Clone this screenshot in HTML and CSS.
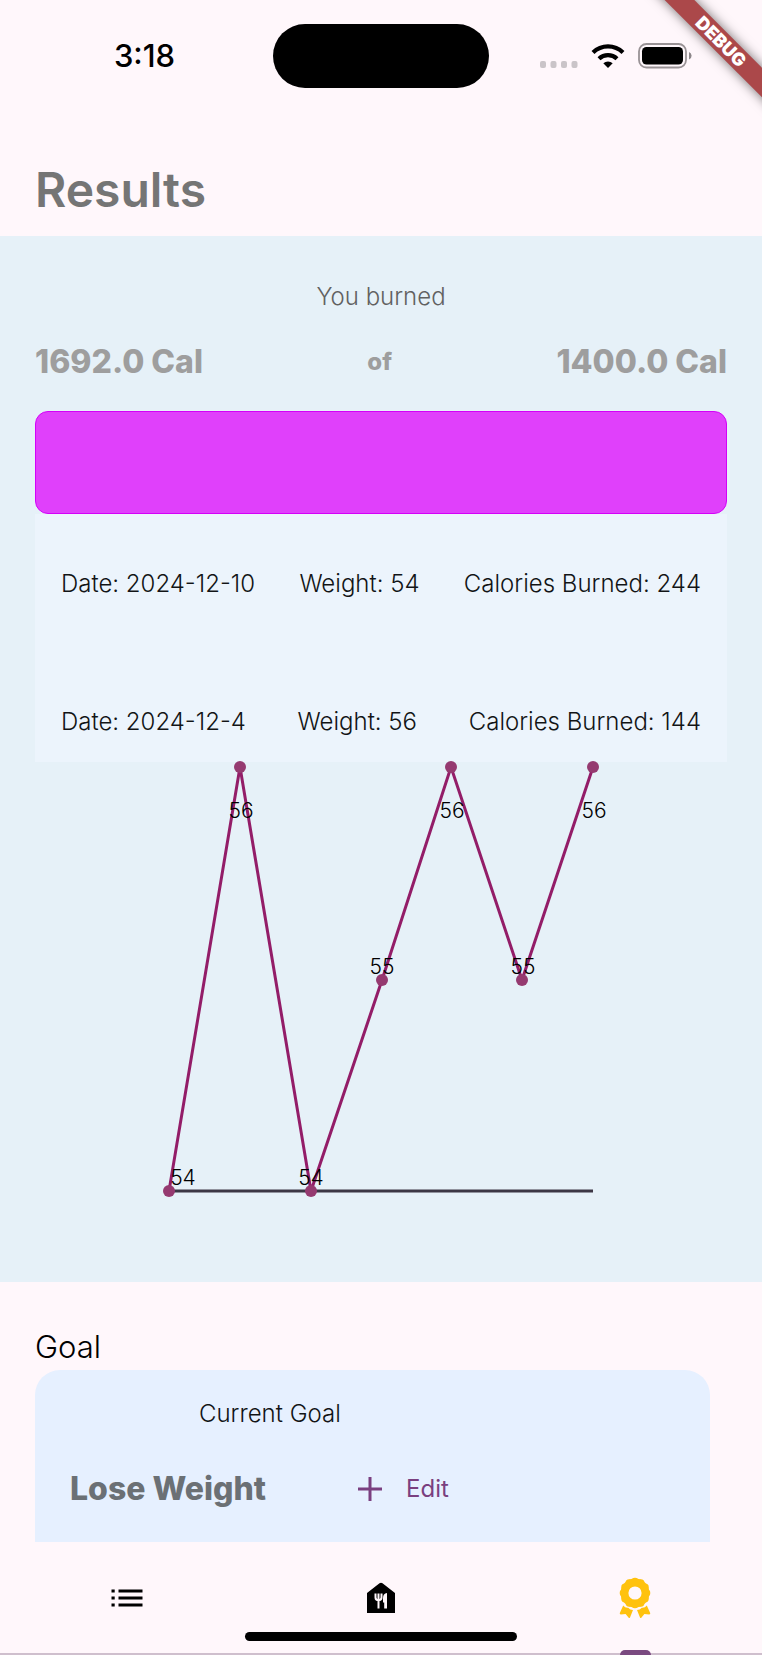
FILE: index.html
```html
<!DOCTYPE html>
<html lang="en">
<head>
<meta charset="utf-8">
<meta name="viewport" content="width=device-width, initial-scale=1">
<title>Results</title>
<link rel="stylesheet" href="styles.css">
</head>
<body>
<div class="app">
  <div class="status-bar">
    <span class="status-time">3:18</span>
    <span class="island"></span>
    <span class="status-icons">
      <svg width="38" height="8" viewBox="0 0 38 8" fill="#cac4c8" aria-hidden="true"><rect width="6" height="7" rx="2"/><rect x="10.500" width="6" height="7" rx="2"/><rect x="21" width="6" height="7" rx="2"/><rect x="31.500" width="6" height="7" rx="2"/></svg>
      <svg class="wifi" width="34" height="26" viewBox="0 0 34 26" fill="none" stroke="#000" stroke-width="4.200" aria-hidden="true"><path d="M2 9.500a21.500 21.500 0 0 1 30 0"/><path d="M8 15.800a13 13 0 0 1 18 0"/><path d="M12.300 20.200a7 7 0 0 1 9.400 0L17 25z" fill="#000" stroke="none"/></svg>
      <svg class="battery" width="54" height="26" viewBox="0 0 54 26" aria-hidden="true"><rect x="1" y="1" width="47" height="23.500" rx="7.500" fill="none" stroke="#999295" stroke-width="1.800"/><rect x="4" y="4" width="41" height="17.500" rx="4.500"/><path d="M51 9q2.600 1 2.600 3.800T51 16.600z" fill="#8d878a"/></svg>
    </span>
  </div>
  <div class="debug-corner"><span class="debug-banner">DEBUG</span></div>

  <header class="page-head"><h1 class="title">Results</h1></header>

  <main class="content">
    <section class="burned">
      <p class="burned-label">You burned</p>
      <div class="burned-row">
        <strong class="amount">1692.0 Cal</strong>
        <span class="of">of</span>
        <strong class="amount">1400.0 Cal</strong>
      </div>
      <div class="progress"></div>
      <ul class="log">
        <li class="entry"><span>Date: 2024-12-10</span><span>Weight: 54</span><span>Calories Burned: 244</span></li>
        <li class="entry"><span>Date: 2024-12-4</span><span>Weight: 56</span><span>Calories Burned: 144</span></li>
      </ul>
      <svg class="chart" viewBox="0 0 692 442" role="img" aria-label="Weight history">
        <path class="axis" d="M134 429H558"/>
        <path class="line" d="M134 429L205 5L276 429L347 218L416 5L487 218L558 5"/>
        <g class="dots"><circle cx="134" cy="429" r="6"/><circle cx="205" cy="5" r="6"/><circle cx="276" cy="429" r="6"/><circle cx="347" cy="218" r="6"/><circle cx="416" cy="5" r="6"/><circle cx="487" cy="218" r="6"/><circle cx="558" cy="5" r="6"/></g>
        <g class="values"><text x="148" y="423">54</text><text x="206" y="56">56</text><text x="276" y="423">54</text><text x="347" y="212">55</text><text x="417" y="56">56</text><text x="488" y="212">55</text><text x="559" y="56">56</text></g>
      </svg>
    </section>

    <section class="goal">
      <h2 class="goal-title">Goal</h2>
      <div class="goal-card">
        <p class="goal-label">Current Goal</p>
        <div class="goal-row">
          <strong class="goal-name">Lose Weight</strong>
          <button class="edit" type="button">
            <svg width="24" height="24" viewBox="0 0 24 24" fill="none" stroke="currentColor" stroke-width="3" aria-hidden="true"><path d="M0 12H24M12 0V24"/></svg>
            Edit
          </button>
        </div>
      </div>
    </section>
  </main>

  <nav class="tabs">
    <a class="tab" href="#list" aria-label="List">
      <svg width="32" height="18" viewBox="0 0 32 18" stroke="#000" stroke-width="3.200" aria-hidden="true"><path d="M.5 2h3.200M7.500 2H31.500M.5 9h3.200M7.500 9H31.500M.5 16h3.200M7.500 16H31.500"/></svg>
    </a>
    <a class="tab" href="#meals" aria-label="Meals">
      <svg width="28" height="32" viewBox="0 0 28 32" aria-hidden="true"><path d="M0 31V11L12.500 1.300q1.500-1.200 3 0L28 11v20z"/><path d="M8.500 11.500v4q0 2.800 3 2.800t3-2.800v-4M11.500 11.500V26.500" fill="none" stroke="#fff7fb" stroke-width="2"/><path d="M16 20.500V16q0-4.500 4-5V26.500h-2.800v-6z" fill="#fff7fb"/></svg>
    </a>
    <a class="tab tab-active" href="#results" aria-label="Results">
      <svg width="32" height="42" viewBox="0 0 32 42" fill="#ffc20e" aria-hidden="true"><circle cx="16" cy="16" r="10.500" fill="none" stroke="#ffc20e" stroke-width="7.800"/><circle cx="16" cy="16" r="11.600" fill="none" stroke="#ffc20e" stroke-width="7.400" stroke-linecap="round" pathLength="12" stroke-dasharray="0 1" transform="rotate(-90 16 16)"/><path d="M4.200 28.500q2 2.700 5 2.300 1.800 2.200 4.800 2.300L11 40.500q-.7 1.200-1.500 0L6.600 37l-4.800.5q-1.400-.2-1-1.500zM27.800 28.500q-2 2.700-5 2.300-1.800 2.200-4.800 2.300l3 7.400q.7 1.200 1.500 0l2.900-3.500 4.800.5q1.400-.2 1-1.500z"/></svg>
    </a>
    <span class="home-indicator"></span>
  </nav>
</div>
</body>
</html>
```
FILE: styles.css
```css
* { box-sizing: border-box; }
body {
  margin: 0;
  background: #fff7fb;
  color: #121416;
  font-family: Inter, "Liberation Sans", sans-serif;
  font-size: 24px;
  font-weight: 300;
  line-height: 32px;
}
h1, h2, p, ul { margin: 0; padding: 0; }
.app {
  position: relative;
  display: flex;
  flex-direction: column;
  min-height: 100vh;
}
.status-bar {
  display: grid;
  grid-template-columns: 1fr 216px 1fr;
  align-items: center;
  padding-top: 24px;
}
.status-time {
  padding-left: 16px;
  text-align: center;
  color: #000;
  font-size: 31px;
  font-weight: 500;
}
.island {
  height: 64px;
  border-radius: 32px;
  background: #000;
}
.status-icons {
  display: flex;
  align-items: flex-end;
  justify-content: flex-end;
  gap: 13px;
  padding-right: 70px;
}
.debug-corner {
  position: absolute;
  top: 0;
  right: 0;
  width: 130px;
  height: 130px;
  overflow: hidden;
}
.debug-banner {
  position: absolute;
  top: 31px;
  right: -59px;
  width: 200px;
  background: #ab484a;
  box-shadow: 0 0 12px rgba(0, 0, 0, .55);
  color: #fff;
  font-size: 18px;
  font-weight: 900;
  line-height: 21px;
  text-align: center;
  transform: rotate(45deg);
}
.page-head { padding: 72px 35px 16px; }
.title {
  color: #757575;
  font-size: 48px;
  font-weight: 600;
  line-height: 60px;
}
.content { flex: 1; }
.burned {
  padding: 45px 35px 78px;
  background: #e6f1f8;
}
.burned-label {
  color: #616161;
  text-align: center;
}
.burned-row {
  display: flex;
  align-items: center;
  justify-content: space-between;
  padding: 30px 0;
  color: #9e9e9e;
  line-height: 38px;
}
.amount { font-size: 32px; font-weight: 800; }
.of { font-weight: 800; }
.progress {
  height: 103px;
  border: 1px solid #d500f9;
  border-radius: 13px;
  background: #e040fb;
}
.log {
  display: flex;
  flex-direction: column;
  gap: 106px;
  padding: 54px 26px 24px;
  background: #ecf4fc;
  list-style: none;
}
.entry {
  display: flex;
  justify-content: space-between;
}
.chart {
  display: block;
  width: 100%;
  overflow: visible;
}
.axis { stroke: #3c3745; stroke-width: 3; }
.line { fill: none; stroke: #931d68; stroke-width: 3; }
.dots { fill: #953a70; }
.values { font-size: 21px; text-anchor: middle; fill: #000; }
.goal { padding: 44px 52px 0 35px; }
.goal-title {
  padding-bottom: 2px;
  color: #000;
  font-size: 31px;
  font-weight: 300;
  line-height: 42px;
}
.goal-card {
  padding: 28px 35px 34px;
  border-radius: 25px 25px 0 0;
  background: #e6f0ff;
}
.goal-label { padding-left: 129px; }
.goal-row {
  display: flex;
  align-items: center;
  gap: 92px;
  padding-top: 40px;
}
.goal-name {
  color: #6b7075;
  font-size: 32px;
  font-weight: 800;
  line-height: 38px;
}
.edit {
  display: flex;
  align-items: center;
  gap: 24px;
  padding: 0;
  border: 0;
  background: none;
  color: #7a3f80;
  font: inherit;
  font-weight: 400;
}
.tabs {
  position: relative;
  display: grid;
  grid-template-columns: repeat(3, 1fr);
  height: 113px;
  border-bottom: 2px solid #cfbfcd;
}
.tab {
  position: relative;
  display: flex;
  align-items: center;
  justify-content: center;
  height: 111px;
}
.tab-active::after {
  content: "";
  position: absolute;
  bottom: -2px;
  width: 31px;
  height: 5px;
  border-radius: 5px 5px 0 0;
  background: #7a4a80;
}
.home-indicator {
  position: absolute;
  bottom: 12px;
  left: 50%;
  width: 272px;
  height: 9px;
  border-radius: 5px;
  background: #000;
  transform: translateX(-50%);
}
```
